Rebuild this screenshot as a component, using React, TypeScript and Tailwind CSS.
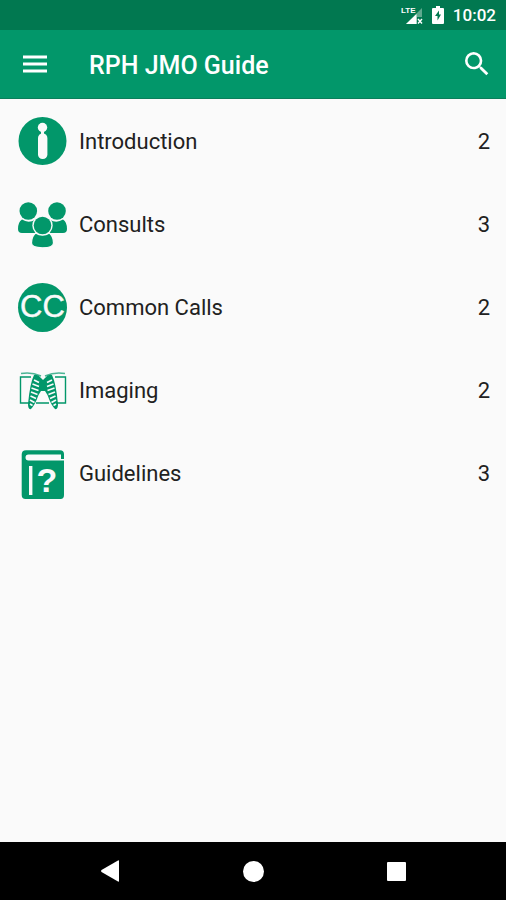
import type { ReactNode } from "react";
import { MdSearch } from "react-icons/md";

const iconClass = "size-[50px] shrink-0 fill-[#02976a]";

function InfoIcon() {
  return (
    <svg viewBox="0 0 50 50" className={iconClass} aria-hidden="true">
      <circle cx="25.5" cy="24" r="24" />
      <g fill="#fafafa">
        <circle cx="25.5" cy="10.5" r="4.7" />
        <path d="M24 14h3v5h-3z" />
        <rect x="21" y="16.5" width="9.4" height="25.5" rx="4.5" />
      </g>
    </svg>
  );
}

function PeopleIcon() {
  return (
    <svg viewBox="0 0 50 50" className={iconClass} aria-hidden="true">
      <circle cx="11.3" cy="11" r="8.8" />
      <circle cx="40" cy="11" r="8.8" />
      <path d="M5 19.5Q11 23.5 18 20L20 33H5Q1 33 1 29Q1 22 5 19.5Z" />
      <path d="M46 19.5Q40 23.5 33 20L31 33H46Q50 33 50 29Q50 22 46 19.5Z" />
      <circle cx="25.5" cy="25.5" r="10.2" fill="#fafafa" />
      <path
        d="M18.5 33Q25.5 37.5 32.5 33Q36.5 37 36.5 43Q36.5 47.8 25.5 47.8T14.5 43Q14.5 37 18.5 33Z"
        stroke="#fafafa"
        strokeWidth="1.2"
      />
      <circle cx="25.5" cy="25.5" r="8.8" />
    </svg>
  );
}

function CallsIcon() {
  return (
    <svg viewBox="0 0 50 50" className={iconClass} aria-hidden="true">
      <circle cx="25.5" cy="24.5" r="24.5" />
      <text
        x="25.5"
        y="34"
        textAnchor="middle"
        fill="#fafafa"
        stroke="#fafafa"
        strokeWidth="0.4"
        className="font-['Liberation_Sans',sans-serif] text-[31px]"
      >
        CC
      </text>
    </svg>
  );
}

function RibsIcon() {
  return (
    <svg viewBox="0 0 50 50" className={iconClass} aria-hidden="true">
      <g fill="none" stroke="#02976a">
        <path d="M14 11H3.5V37H12M38 11H48.5V37H40M19 37H32" strokeWidth="1.4" />
        <path d="M4 7.5Q14 5.5 24 10M48 7.5Q38 5.5 28 10" strokeWidth="1.5" opacity=".7" />
      </g>
      <path d="M17 9Q21 8 24 12L26 14L28 12Q31 8 35 9Q39 17 41 38Q41 44 38 43Q34 39 30.5 29L28 25H24L21.5 29Q18 39 14 43Q11 44 11 38Q13 17 17 9Z" />
      <path
        d="M17 14L22 16.5M15.5 18L22 20.5M14.5 22L21.5 24.5M14 26L20.5 28.5M13.5 30L19 32.5M13 34L17.5 36.5M13 38L15.5 39.5M35 14L30 16.5M36.5 18L30 20.5M37.5 22L30.5 24.5M38 26L31.5 28.5M38.5 30L33 32.5M39 34L34.5 36.5M39 38L36.5 39.5"
        fill="none"
        stroke="#fafafa"
        strokeWidth="1.7"
      />
    </svg>
  );
}

function BookIcon() {
  return (
    <svg viewBox="0 0 50 50" className={iconClass} aria-hidden="true">
      <path d="M9 1.2H43Q47 1.2 47 5V10H44V5.5H11.5Q8.5 5.5 8.5 8.5T11.5 11.5H47V46Q47 50 43.5 50H8.5Q4.7 50 4.7 46V5.5Q4.7 1.2 9 1.2Z" />
      <rect x="12" y="17" width="3.4" height="29" fill="#fafafa" />
      <text
        x="30"
        y="43"
        textAnchor="middle"
        fill="#fafafa"
        className="font-['Liberation_Sans',sans-serif] text-[34px] font-bold"
      >
        ?
      </text>
    </svg>
  );
}

const sections: { name: string; count: number; icon: ReactNode }[] = [
  { name: "Introduction", count: 2, icon: <InfoIcon /> },
  { name: "Consults", count: 3, icon: <PeopleIcon /> },
  { name: "Common Calls", count: 2, icon: <CallsIcon /> },
  { name: "Imaging", count: 2, icon: <RibsIcon /> },
  { name: "Guidelines", count: 3, icon: <BookIcon /> },
];

function StatusBar() {
  return (
    <div className="flex h-[30px] items-center justify-end bg-[#017850] pr-2.5 text-white">
      <svg viewBox="0 0 22 20" className="mr-[9px] h-5 w-[22px]" aria-hidden="true">
        <path d="M21 3V12H16V19H5Z" fill="#5fa98e" />
        <path d="M15.5 9V19H5Z" fill="#fff" />
        <path d="M17 14L21 18.5M21 14L17 18.5" stroke="#fff" strokeWidth="1.4" />
        <text
          x="0"
          y="8"
          fill="#fff"
          className="font-['Liberation_Sans',sans-serif] text-[8px] font-bold"
        >
          LTE
        </text>
      </svg>
      <svg viewBox="0 0 12 18" className="mr-[9px] h-[18px] w-3" aria-hidden="true">
        <path d="M4 0H8V2H11Q12 2 12 3V17Q12 18 11 18H1Q0 18 0 17V3Q0 2 1 2H4Z" fill="#fff" />
        <path d="M7 4.5L3 10H5.5V14.5L9 8.5H7Z" fill="#017850" />
      </svg>
      <span className="text-[17px] leading-5 font-medium">10:02</span>
    </div>
  );
}

export default function App() {
  return (
    <div className="flex min-h-screen flex-col bg-[#fafafa] font-[Roboto,sans-serif] text-[#212121]">
      <StatusBar />
      <header className="flex h-[69px] items-center border-b border-[#0a7f5b] bg-[#02976a] px-[15px] text-white">
        <button type="button" aria-label="Open menu" className="flex size-10 items-center justify-center">
          <svg viewBox="0 0 24 18" className="h-[18px] w-6 fill-white" aria-hidden="true">
            <path d="M0 .5H24V3.5H0ZM0 7.5H24V10.5H0ZM0 14.5H24V17.5H0Z" />
          </svg>
        </button>
        <h1 className="ml-[34px] flex-1 pt-1 text-[25px] leading-8 font-medium">RPH JMO Guide</h1>
        <button type="button" aria-label="Search" className="-mr-1.5 flex size-10 items-center justify-center">
          <MdSearch className="size-8" />
        </button>
      </header>
      <main className="flex-1 pt-px">
        <ul>
          {sections.map((section) => (
            <li key={section.name}>
              <a href="#" className="flex h-[83px] items-center pr-4 pl-[17px] text-[22px] leading-7">
                {section.icon}
                <span className="ml-3 flex-1">{section.name}</span>
                <span>{section.count}</span>
              </a>
            </li>
          ))}
        </ul>
      </main>
      <nav className="flex h-[58px] items-center justify-center gap-[103px] bg-black">
        <button type="button" aria-label="Back" className="flex size-10 items-center justify-center">
          <svg viewBox="0 0 20 22" className="h-[22px] w-5 fill-white" aria-hidden="true">
            <path d="M18 .5Q19 0 19 1V21Q19 22 18 21.5L1.5 12Q.5 11 1.5 10Z" />
          </svg>
        </button>
        <button type="button" aria-label="Home" className="flex size-10 items-center justify-center">
          <span className="size-[21px] rounded-full bg-white" />
        </button>
        <button type="button" aria-label="Recent apps" className="flex size-10 items-center justify-center">
          <span className="size-[19px] rounded-[1px] bg-white" />
        </button>
      </nav>
    </div>
  );
}
